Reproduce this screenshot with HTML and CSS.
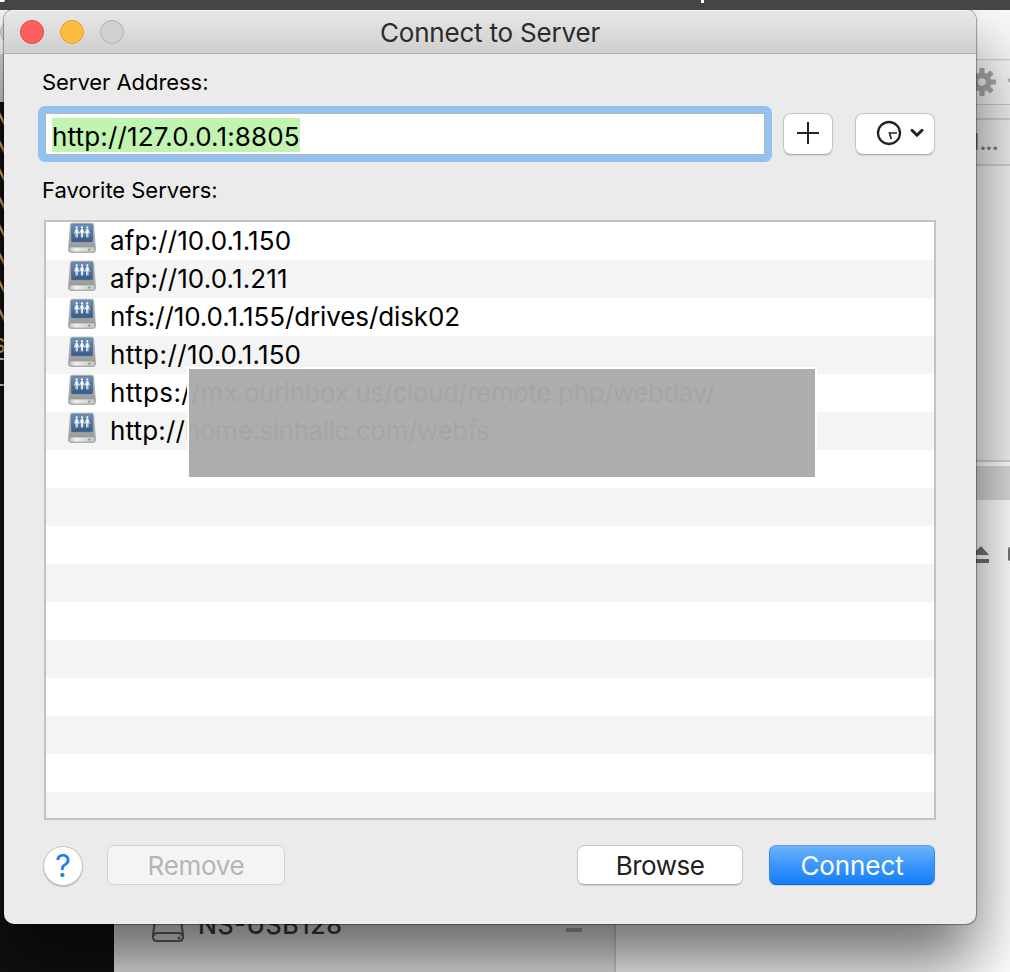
FILE: index.html
```html
<!DOCTYPE html>
<html lang="en">
<head>
<meta charset="utf-8">
<title>Connect to Server</title>
<link rel="stylesheet" href="styles.css">
</head>
<body>
<svg class="desktop" width="1010" height="972" viewBox="0 0 1010 972" aria-hidden="true">
  <defs>
    <linearGradient id="toolbar" x1="0" y1="0" x2="0" y2="1"><stop offset="0" stop-color="#fafafa"/><stop offset="1" stop-color="#f0f0f0"/></linearGradient>
  </defs>
  <rect width="1010" height="972" fill="#fff"/>
  <rect y="10" width="10" height="44" fill="#f6f6f6"/>
  <rect y="54" width="10" height="48" fill="#d6d6d6"/>
  <circle cx="12" cy="32" r="11.5" fill="#ddd" stroke="#bbb"/>
  <rect y="102" width="114" height="870" fill="#13110f"/>
  <g stroke="#d9ad5e" stroke-width="2.4">
    <path d="M-2 111L6 127M-2 139L6 155M-2 167L6 183M-2 195L6 211M-2 223L6 239M-2 251L6 267M-2 279L6 295M-2 307L6 323"/>
  </g>
  <text x="-8" y="353" font-size="27" fill="#d9ad5e">s</text>
  <path d="M0 359H6M0 385H6" stroke="#ddd" stroke-width="2"/>
  <rect x="114" y="820" width="500" height="152" fill="#ececec"/>
  <rect x="614" y="820" width="2" height="152" fill="#d4d4d4"/>
  <rect x="970" y="10" width="40" height="94" fill="url(#toolbar)"/>
  <rect x="970" y="59" width="40" height="1.4" fill="#d3d3d3"/>
  <rect x="970" y="104" width="40" height="1.4" fill="#c6c6c6"/>
  <rect x="970" y="105" width="40" height="59" fill="#ededed"/>
  <rect x="970" y="118" width="40" height="2" fill="#cfcfcf"/>
  <rect x="970" y="164" width="40" height="2" fill="#cfcfcf"/>
  <rect x="970" y="166" width="40" height="294" fill="#f1f1f1"/>
  <rect x="970" y="460" width="40" height="2" fill="#d3d3d3"/>
  <rect x="970" y="466" width="40" height="34" fill="#d9d9d9"/>
  <g transform="translate(982 82)" fill="#a6a6a6">
    <g id="teeth">
      <rect x="-2.6" y="-14" width="5.2" height="28" rx="1"/>
      <rect x="-2.6" y="-14" width="5.2" height="28" rx="1" transform="rotate(45)"/>
      <rect x="-2.6" y="-14" width="5.2" height="28" rx="1" transform="rotate(90)"/>
      <rect x="-2.6" y="-14" width="5.2" height="28" rx="1" transform="rotate(135)"/>
    </g>
    <circle r="9.5"/>
    <circle r="3.8" fill="#ececec"/>
  </g>
  <path d="M1008 79l5 5 5-5" fill="none" stroke="#aaa" stroke-width="2.5"/>
  <text x="958" y="150" font-size="23" font-weight="600" fill="#7d7d80">M<tspan letter-spacing="-1.2">...</tspan></text>
  <path d="M972 555L981 546L989 555ZM972 559H989V563H972Z" fill="#737373"/>
  <rect x="1008" y="547" width="6" height="14" rx="2" fill="#737373"/>
  <g fill="none" stroke="#666" stroke-width="2">
    <path d="M156 913L153 935V937Q153 941 157 941H179Q183 941 183 937V935L180 913M154 936Q154 933 158 933H178Q182 933 182 936"/>
    <circle cx="179" cy="938" r="0.6"/>
  </g>
  <text x="198" y="934" font-size="25" font-weight="500" fill="#3d3d40" textLength="144">NS-USB128</text>
  <rect x="566" y="928" width="16" height="4" fill="#aaa"/>
  <rect width="1010" height="10" fill="#454545"/>
  <path d="M0 0H5L4 2H0ZM701 0H704V3H701Z" fill="#fff"/>
</svg>

<svg class="defs" width="0" height="0" aria-hidden="true">
  <defs>
    <linearGradient id="case" x1="0" y1="0" x2="0" y2="1"><stop offset="0" stop-color="#c3c6c4"/><stop offset="1" stop-color="#929292"/></linearGradient>
    <linearGradient id="screen" x1="0" y1="0" x2="0" y2="1"><stop offset="0" stop-color="#6e92bd"/><stop offset="1" stop-color="#345a87"/></linearGradient>
    <linearGradient id="lip" x1="0" y1="0" x2="1" y2="0"><stop offset="0" stop-color="#b5b8b7"/><stop offset=".25" stop-color="#edf0ef"/><stop offset="1" stop-color="#c3c9c6"/></linearGradient>
    <symbol id="server" viewBox="0 0 30 32">
      <path d="M5 1.2H25Q26.4 1.2 26.6 2.6L28.3 25V28.5Q28.3 30.3 26.5 30.3H3.5Q1.7 30.3 1.7 28.5V25L3.4 2.6Q3.6 1.2 5 1.2Z" fill="url(#case)" stroke="#a5a8a7" stroke-width=".8"/>
      <path d="M2.1 25H27.9V28.4Q27.9 30 26.5 30H3.5Q2.1 30 2.1 28.4Z" fill="url(#lip)" stroke="#999" stroke-width=".7"/>
      <rect x="4.4" y="2.2" width="21.2" height="17.6" rx="1.2" fill="url(#screen)" stroke="#395a7d" stroke-width=".5"/>
      <g fill="#fff" stroke="#fff">
        <g id="person"><circle cx="9.7" cy="5.4" r="1.1" stroke="none"/><path d="M9 7.6L7.4 11.4M10.4 7.6L12 11.4M9.1 10V15.4M10.3 10V15.4" fill="none" stroke-width=".9"/><rect x="8.7" y="6.9" width="2" height="4.6" stroke="none"/></g>
        <use href="#person" x="5.3"/><use href="#person" x="10.6"/>
      </g>
      <circle cx="22.3" cy="27.6" r="1.2" fill="#69b56a"/>
    </symbol>
  </defs>
</svg>

<main class="window">
  <header class="titlebar">
    <div class="lights"><i class="light close"></i><i class="light minimize"></i><i class="light zoom"></i></div>
    <h1 class="title">Connect to Server</h1>
  </header>
  <section class="content">
    <div class="label address-label">Server Address:</div>
    <div class="address-row">
      <div class="field"><span class="selection">http://127.0.0.1:8805</span></div>
      <button class="button add"><svg width="24" height="24" viewBox="0 0 24 24"><path d="M12 1V23M1 12H23" stroke="#222" stroke-width="2"/></svg></button>
      <button class="button recent">
        <svg width="60" height="30" viewBox="0 0 60 30" fill="none" stroke="#222"><circle cx="24" cy="15" r="11" stroke-width="2.3"/><path d="M32 15H24.5L26.3 21" stroke-width="1.7"/><path d="M47 12.3L52 17.3L57 12.3" stroke-width="3" stroke-linecap="round" stroke-linejoin="round"/></svg>
      </button>
    </div>
    <div class="label favorite-label">Favorite Servers:</div>
    <div class="list">
      <div class="row"><svg class="drive"><use href="#server"/></svg><span class="url numeric">afp://10.0.1.150</span></div>
      <div class="row"><svg class="drive"><use href="#server"/></svg><span class="url numeric">afp://10.0.1.211</span></div>
      <div class="row"><svg class="drive"><use href="#server"/></svg><span class="url mixed">nfs://10.0.1.155/drives/disk02</span></div>
      <div class="row"><svg class="drive"><use href="#server"/></svg><span class="url numeric"><span class="scheme">http://</span>10.0.1.150</span></div>
      <div class="row"><svg class="drive"><use href="#server"/></svg><span class="url"><span class="scheme secure">https://</span>mx.ourinbox.us/cloud/remote.php/webdav/</span></div>
      <div class="row"><svg class="drive"><use href="#server"/></svg><span class="url host"><span class="scheme plain">http://</span>home.sinhallc.com/webfs</span></div>
      <div class="cover"></div>
    </div>
    <footer class="actions">
      <button class="help">?</button>
      <button class="button remove" disabled>Remove</button>
      <button class="button browse">Browse</button>
      <button class="button connect">Connect</button>
    </footer>
  </section>
</main>
</body>
</html>
```
FILE: styles.css
```css
* { box-sizing: border-box; }
body {
  margin: 0;
  width: 1010px;
  height: 972px;
  overflow: hidden;
  position: relative;
  font-family: Inter, "Liberation Sans", sans-serif;
  color: #000;
}
button { font: inherit; padding: 0; margin: 0; }
svg { display: block; }
.desktop { position: absolute; inset: 0; }
.defs { position: absolute; }

.window {
  position: absolute;
  left: 4px;
  top: 10px;
  width: 972px;
  height: 914px;
  border-radius: 10px;
  background: #ebebeb;
  box-shadow: 0 0 1px 1px rgba(0, 0, 0, .35), 0 40px 66px rgba(0, 0, 0, .56);
  clip-path: inset(0 -40px -60px -10px);
  display: flex;
  flex-direction: column;
}
.titlebar {
  height: 44px;
  display: grid;
  grid-template-columns: 1fr auto 1fr;
  align-items: center;
  border-radius: 10px 10px 0 0;
  border-bottom: 1px solid #aeaeae;
  background: linear-gradient(#e8e8e8, #cfcfcf);
  box-shadow: inset 0 1px #f6f6f6;
}
.lights { display: flex; gap: 16px; padding-left: 16px; }
.light { width: 24px; height: 24px; border-radius: 50%; border: 1px solid; }
.close { background: #fc605c; border-color: #e04743; }
.minimize { background: #fdbd41; border-color: #dda03a; }
.zoom { background: #d0d0d0; border-color: #b0b0b0; }
.title { margin: 0; font-size: 26px; font-weight: 400; line-height: 32px; letter-spacing: -.2px; color: #2b2b2b; padding-top: 2px; }

.content { display: flex; flex-direction: column; padding: 0 40px 0 34px; }
.label { font-size: 22px; line-height: 28px; padding-left: 4px; }
.address-label { margin-top: 14px; letter-spacing: -.05px; }
.address-row { display: flex; align-items: center; height: 56px; margin-top: 10px; }
.field {
  width: 734px;
  height: 56px;
  border: 7px solid #94c2f0;
  border-radius: 7px;
  background: #fff;
  box-shadow: inset 0 0 0 1px #b4b4b4;
  display: flex;
  align-items: center;
  padding-left: 7px;
}
.selection { width: 248px; height: 34px; margin-top: 2px; line-height: 35px; background: #c1f4b0; font-size: 26px; letter-spacing: .15px; white-space: nowrap; padding-top: 1px; }
.button {
  display: flex;
  align-items: center;
  justify-content: center;
  border: 1px solid #c5c5c5;
  border-bottom-color: #adadad;
  border-radius: 8px;
  background: #fff;
  box-shadow: 0 1px 1px rgba(0, 0, 0, .1);
  font-size: 26px;
  color: #222;
}
.add { width: 50px; height: 42px; margin-left: 11px; padding-bottom: 2px; }
.recent { width: 80px; height: 42px; margin-left: 22px; padding-bottom: 2px; }
.favorite-label { margin-top: 14px; letter-spacing: -.03px; }

.list {
  position: relative;
  margin: 16px 0 0 6px;
  width: 892px;
  height: 600px;
  border: 2px solid #c2c2c2;
  background: repeating-linear-gradient(#fff 0 38px, #f4f4f4 38px 76px);
}
.row { height: 38px; display: flex; padding: 0 0 0 21px; }
.drive { width: 30px; height: 32px; margin-right: 13px; flex: none; }
.url { font-size: 26px; line-height: 38px; white-space: nowrap; letter-spacing: -.44px; }
.numeric { letter-spacing: .13px; }
.mixed { letter-spacing: -.1px; }
.host { letter-spacing: -.4px; }
.scheme { letter-spacing: .45px; }
.secure { letter-spacing: .4px; }
.plain { letter-spacing: .15px; }
.cover {
  position: absolute;
  left: 141px;
  top: 145px;
  width: 630px;
  height: 112px;
  border: 2px solid #fff;
  background: rgba(170, 170, 170, .969);
  background-clip: padding-box;
}

.actions { display: flex; height: 41px; margin: 25px 0 0 5px; }
.help { width: 40px; height: 40px; margin-top: 1px; border: 1px solid #c2c2c2; border-radius: 50%; background: #fff; box-shadow: 0 1px 1px rgba(0, 0, 0, .2); color: #147efb; font-size: 31px; line-height: 36px; }
.actions .button { height: 40px; border-radius: 7px; padding-bottom: 0; }
.remove { width: 178px; margin-left: 24px; letter-spacing: -.3px; }
.actions .remove { background: #f4f4f4; color: #b5b5b5; border-color: #d2d2d2; box-shadow: none; }
.browse { width: 166px; margin-left: 292px; letter-spacing: -.5px; }
.connect { width: 166px; margin-left: 26px; letter-spacing: -.1px; }
.actions .connect { color: #fff; background: linear-gradient(#6db3f8, #4099fa 45%, #157efb); border-color: #55a0ee #2f87f5 #0d63e8; }
```
